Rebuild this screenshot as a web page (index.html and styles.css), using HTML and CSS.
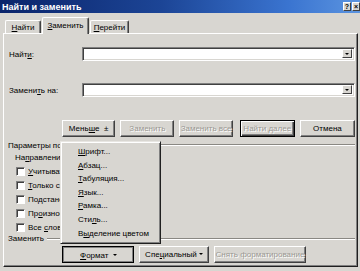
FILE: index.html
```html
<!DOCTYPE html>
<html lang="ru">
<head>
    <meta charset="UTF-8">
    <title>Найти и заменить</title>
    <link rel="stylesheet" href="styles.css">
</head>
<body>
<div class="window">
    <div class="titlebar">
        <span class="title">Найти и заменить</span>
        <div class="caption-btns">
            <span class="cbtn">?</span>
            <span class="cbtn">×</span>
        </div>
    </div>

    <div class="tabs">
        <div class="tab tab-find"><span><u>Н</u>айти</span></div>
        <div class="tab tab-replace active"><span><u>З</u>аменить</span></div>
        <div class="tab tab-goto"><span><u>П</u>ерейти</span></div>
    </div>

    <div class="panel">
        <div class="field-row first">
            <span class="label">Найт<u>и</u>:</span>
            <div class="combo"><span class="combo-btn"><span class="arrow"></span></span></div>
        </div>
        <div class="field-row second">
            <span class="label">Замени<u>т</u>ь на:</span>
            <div class="combo"><span class="combo-btn"><span class="arrow"></span></span></div>
        </div>

        <div class="btn-row top">
            <div class="btn w54"><span>Мень<u>ш</u>е&nbsp;&nbsp;±</span></div>
            <div class="btn w55 disabled"><span>Заменить</span></div>
            <div class="btn w54 disabled"><span>Заменить все</span></div>
            <div class="btn w56 default disabled"><span>Найти далее</span></div>
            <div class="btn w56"><span>Отмена</span></div>
        </div>

        <div class="group-head">
            <span class="options-clip">Параметры поиска</span><span class="etch"></span>
        </div>
        <div class="options-clip">
            <div class="direction">На<u>п</u>равление:</div>
            <div class="check-row"><span class="box"></span><span><u>У</u>читывать регистр</span></div>
            <div class="check-row"><span class="box"></span><span><u>Т</u>олько слово целиком</span></div>
            <div class="check-row"><span class="box"></span><span>Подстановочные знаки</span></div>
            <div class="check-row"><span class="box"></span><span>Пр<u>о</u>износится как</span></div>
            <div class="check-row"><span class="box"></span><span>Все <u>с</u>ловоформы</span></div>
        </div>

        <div class="group-head replace">
            <span>Заменить</span><span class="etch"></span>
        </div>

        <div class="btn-row bottom">
            <div class="btn w72 pressed"><span><u>Ф</u>ормат&nbsp;&nbsp;</span><span class="tri"></span></div>
            <div class="btn w70"><span>Спе<u>ц</u>иальный&nbsp;</span><span class="tri"></span></div>
            <div class="btn w92 disabled"><span>Снять форматирование</span></div>
        </div>

        <div class="menu">
            <div class="item"><u>Ш</u>рифт...</div>
            <div class="item"><u>А</u>бзац...</div>
            <div class="item"><u>Т</u>абуляция...</div>
            <div class="item"><u>Я</u>зык...</div>
            <div class="item"><u>Р</u>амка...</div>
            <div class="item">Сти<u>л</u>ь...</div>
            <div class="item">В<u>ы</u>деление цветом</div>
        </div>
    </div>
</div>
</body>
</html>
```

FILE: styles.css
```css
html,
body {
    margin: 0;
    padding: 0;
}

body {
    width: 360px;
    height: 271px;
    overflow: hidden;
    background: #d8d6d1;
    font-family: "Liberation Sans", Arial, sans-serif;
    font-size: 8px;
    color: #000;
}

.window {
    display: flex;
    flex-direction: column;
    height: 271px;
}

/* title bar */
.titlebar {
    height: 13px;
    display: flex;
    align-items: center;
    justify-content: space-between;
    padding-left: 2px;
    background: linear-gradient(to right, #0a246a 0%, #1c4596 45%, #3a74d0 80%, #5b94e0 100%);
    color: #fff;
    font-weight: bold;
    font-size: 9px;
}

.caption-btns {
    display: flex;
    gap: 1px;
}

.cbtn {
    box-sizing: border-box;
    width: 8px;
    height: 9px;
    background: #d8d6d1;
    border: 1px solid;
    border-color: #fff #404040 #404040 #fff;
    color: #000;
    font-size: 7px;
    line-height: 7px;
    text-align: center;
    font-weight: bold;
}

/* tabs */
.tabs {
    display: flex;
    align-items: flex-end;
    height: 16px;
    margin-top: 4px;
    padding-left: 5px;
}

.tab {
    box-sizing: border-box;
    height: 13px;
    display: flex;
    align-items: center;
    justify-content: center;
    border: 1px solid;
    border-bottom: none;
    border-color: #fff #404040 #404040 #fff;
    border-radius: 2px 2px 0 0;
    box-shadow: inset -1px 0 #808080;
}

.tab-find {
    width: 36px;
}

.tab-replace {
    width: 47px;
    margin-left: 1px;
}

.tab-goto {
    width: 39px;
    margin-left: 1px;
}

.tab.active {
    position: relative;
    z-index: 2;
    height: 17px;
    margin-bottom: -1px;
    padding-bottom: 2px;
    background: #d8d6d1;
}

/* panel */
.panel {
    position: relative;
    box-sizing: border-box;
    width: 355px;
    height: 234px;
    margin-left: 3px;
    padding: 13px 2px 0 5px;
    border: 1px solid;
    border-color: #fff #202020 #202020 #fff;
    box-shadow: inset -1px -1px #808080;
}

.field-row {
    display: flex;
    align-items: center;
    height: 14px;
}

.field-row.second {
    margin-top: 22px;
}

.label {
    width: 73px;
}

.combo {
    box-sizing: border-box;
    flex: 1;
    height: 14px;
    background: #fff;
    border: 1px solid;
    border-color: #808080 #fff #fff #808080;
    box-shadow: inset 1px 1px #404040, inset -1px -1px #d8d6d1;
    display: flex;
    justify-content: flex-end;
    padding: 2px;
}

.combo-btn {
    box-sizing: border-box;
    width: 10px;
    height: 9px;
    margin-top: -1px;
    background: #d8d6d1;
    border: 1px solid;
    border-color: #fff #404040 #404040 #fff;
    display: flex;
    align-items: center;
    justify-content: center;
}

.arrow,
.tri {
    display: inline-block;
    width: 0;
    height: 0;
    border-left: 2px solid transparent;
    border-right: 2px solid transparent;
    border-top: 2px solid #000;
}

/* buttons */
.btn-row {
    display: flex;
    height: 17px;
}

.btn-row.top {
    margin-top: 23px;
    padding-left: 53px;
    gap: 5px;
}

.btn-row.bottom {
    margin-top: 3px;
    padding-left: 53px;
    gap: 5px;
}

.btn {
    box-sizing: border-box;
    height: 17px;
    display: flex;
    align-items: center;
    justify-content: center;
    white-space: nowrap;
    border: 1px solid;
    border-color: #fff #404040 #404040 #fff;
    box-shadow: inset -1px -1px #808080;
}

.w54 { width: 54px; }
.w55 { width: 55px; }
.w56 { width: 56px; }
.w70 { width: 70px; }
.w72 { width: 72px; }
.w92 { width: 92px; }

.btn.disabled {
    color: #9a9893;
    text-shadow: 1px 1px #fff;
}

.btn.default {
    margin-left: 2px;
    border-color: #000;
    box-shadow: inset 1px 1px #fff, inset -1px -1px #404040, inset -2px -2px #808080;
}

.btn.pressed {
    border-color: #000;
    box-shadow: inset 1px 1px #808080, inset -1px -1px #808080;
    padding: 1px 0 0 1px;
}

.tri {
    margin-top: -1px;
}

/* search options */
.group-head {
    display: flex;
    align-items: center;
    gap: 3px;
    height: 12px;
    margin-top: 2px;
    margin-left: -1px;
}

.group-head.replace {
    height: 9px;
    margin-top: 0;
}

.etch {
    flex: 1;
    border-top: 1px solid #8a8883;
    border-bottom: 1px solid #fff;
}

/* the left column is hidden behind the open menu */
.options-clip {
    width: 52px;
    overflow: hidden;
    white-space: nowrap;
    flex: none;
}

.direction {
    height: 13px;
    line-height: 13px;
    padding-left: 6px;
}

.check-row {
    display: flex;
    align-items: center;
    height: 14px;
    padding-left: 7px;
}

.box {
    box-sizing: border-box;
    flex: none;
    width: 9px;
    height: 9px;
    margin-right: 3px;
    background: #fff;
    border: 1px solid;
    border-color: #808080 #fff #fff #808080;
    box-shadow: inset 1px 1px #404040;
}

/* popup menu under the Формат button */
.menu {
    position: absolute;
    left: 56px;
    top: 107px;
    z-index: 5;
    box-sizing: border-box;
    width: 101px;
    height: 103px;
    padding: 3px 0;
    background: #d8d6d1;
    border: 1px solid;
    border-color: #e8e6e2 #202020 #202020 #e8e6e2;
    box-shadow: inset 1px 1px #fff, inset -1px -1px #808080;
}

.item {
    height: 13.6px;
    line-height: 13.6px;
    padding-left: 17px;
    white-space: nowrap;
}
```
